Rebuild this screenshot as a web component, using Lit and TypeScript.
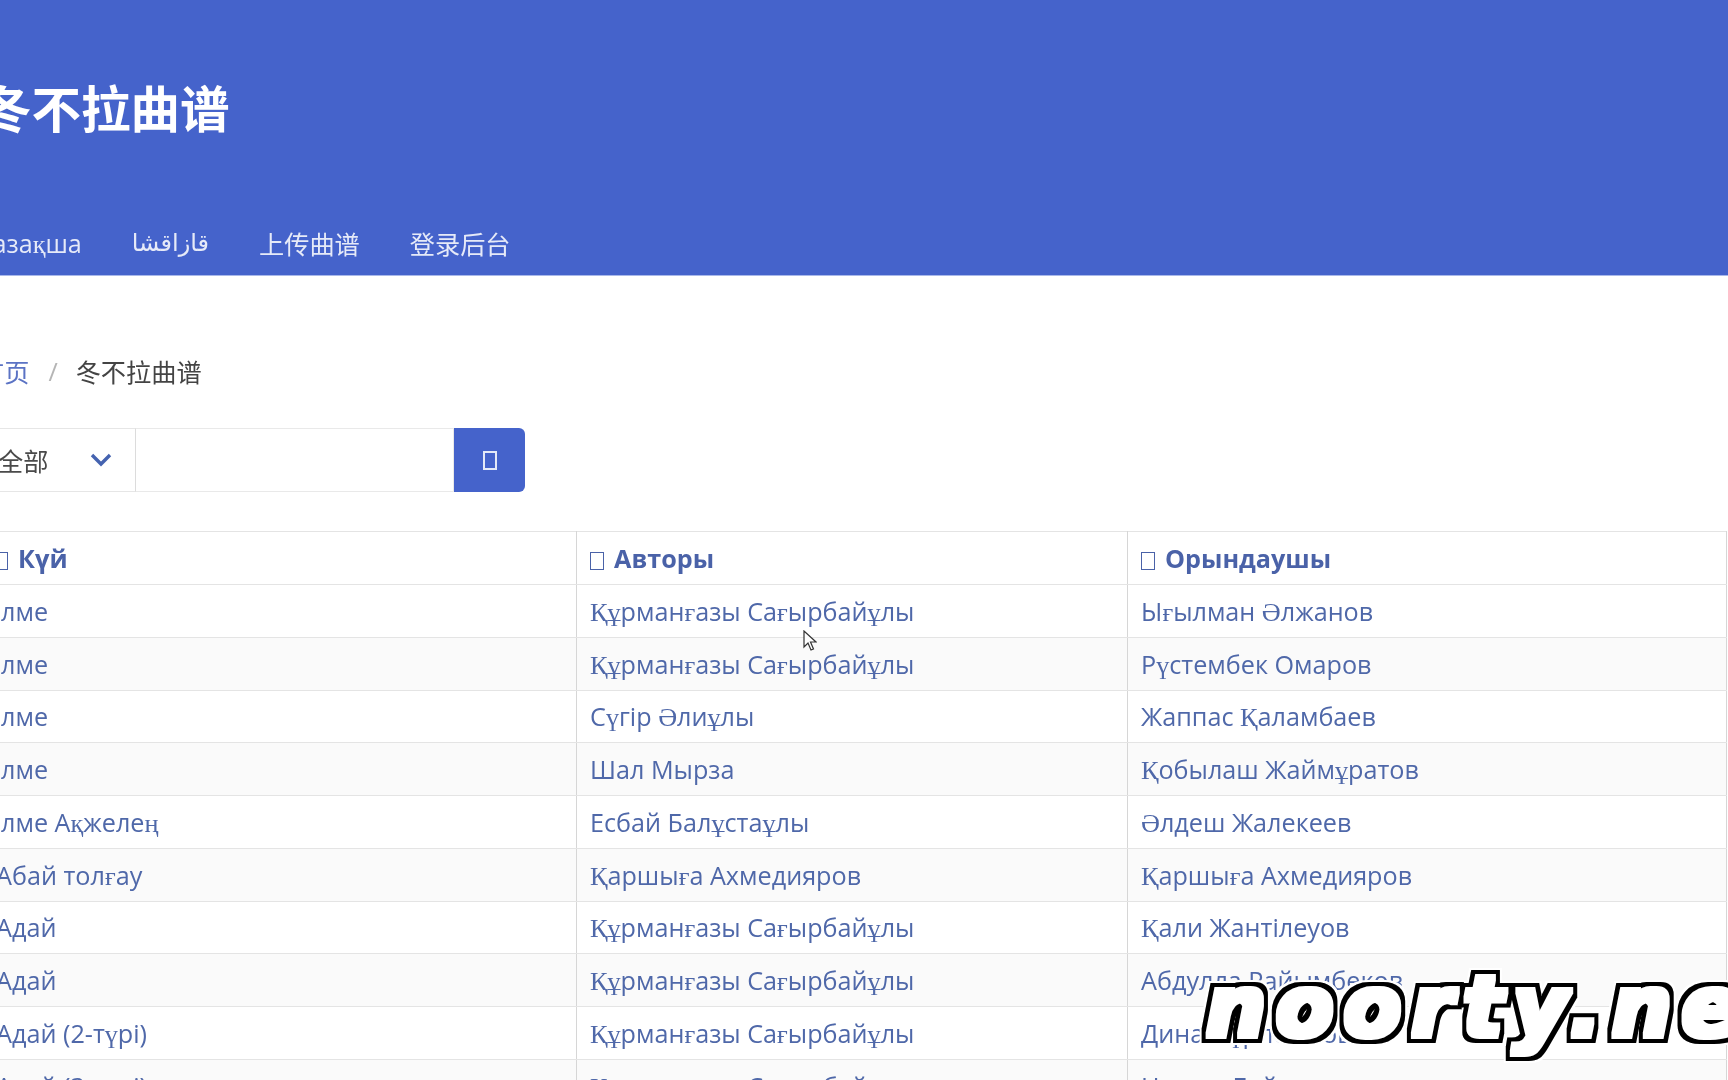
import { LitElement, html, css } from "lit";
import { customElement } from "lit/decorators.js";

const rows: [string, string, string][] = [
  ["лме", "Құрманғазы Сағырбайұлы", "Ығылман Әлжанов"],
  ["лме", "Құрманғазы Сағырбайұлы", "Рүстембек Омаров"],
  ["лме", "Сүгір Әлиұлы", "Жаппас Қаламбаев"],
  ["лме", "Шал Мырза", "Қобылаш Жаймұратов"],
  ["лме Ақжелең", "Есбай Балұстаұлы", "Әлдеш Жалекеев"],
  ["Абай толғау", "Қаршыға Ахмедияров", "Қаршыға Ахмедияров"],
  ["Адай", "Құрманғазы Сағырбайұлы", "Қали Жантілеуов"],
  ["Адай", "Құрманғазы Сағырбайұлы", "Абдулла Райымбеков"],
  ["Адай (2-түрі)", "Құрманғазы Сағырбайұлы", "Дина Нұрпейісова"],
  ["Адай (3-түрі)", "Құрманғазы Сағырбайұлы", "Нұрым Байжанов"],
];

const kaz = (s: string) =>
  s.split(/([ҚқҒғҰұҮүҢңӘә]+)/).map((p, i) => (i % 2 ? html`<span class="kz">${p}</span>` : p));

@customElement("app-root")
export class AppRoot extends LitElement {
  static styles = css`
    :host { display: block; width: 1728px; height: 1080px; overflow: hidden; position: relative; background: #fff;
      font-family: "Open Sans", "Noto Sans CJK SC", sans-serif; font-size: 25.2px; color: #4a4a4a; filter: blur(0.35px); }
    header { height: 276px; background: #4563cb; border-bottom: 1px solid #a9b8ea; box-sizing: border-box;
      display: flex; flex-direction: column; margin-left: -19px; }
    h1 { margin: 80px 0 0 1px; font: 700 49.5px/54px "Noto Sans CJK SC", sans-serif; color: #fff; }
    nav { display: flex; gap: 50px; margin-top: 92px; margin-left: -6px; color: #e6eaf8; line-height: 34px;
      font-family: "Noto Sans CJK SC", sans-serif; }
    nav .cy { font-family: "Open Sans", sans-serif; }
    nav .ar { font-family: "DejaVu Sans", sans-serif; font-size: 24px; }
    .crumb { display: flex; align-items: center; margin: 78px 0 0 -21px; height: 34px;
      font-family: "Noto Sans CJK SC", sans-serif; color: #444; }
    .crumb a { color: #5b73c4; }
    .crumb i { font-style: normal; color: #b5b5b5; margin: 0 18px 0 19px; font-family: "Open Sans", sans-serif; }
    .search { display: flex; height: 64px; margin: 40px 0 0 -42px; width: 567px; }
    .select { width: 178px; box-sizing: border-box; border: 1px solid #e6e6e6; border-right: 1px solid #dcdcdc;
      display: flex; align-items: center; justify-content: space-between; padding: 0 22px 0 39px;
      font-family: "Noto Sans CJK SC", sans-serif; color: #4a4a4a; }
    .input { flex: 1; box-sizing: border-box; border: 1px solid #e9e9e9; border-left: 0; }
    .btn { width: 71px; background: #4563cb; border-radius: 0 6px 6px 0; display: flex; align-items: center; justify-content: center; }
    .btn b { display: block; width: 10px; height: 15px; border: 2px solid #e4e9f8; }
    table { border-collapse: collapse; table-layout: fixed; width: 1741px; margin: 39px 0 0 -15px; color: #4f68a9; }
    col.a { width: 591px; } col.b { width: 551px; } col.c { width: 599px; }
    th, td { border: 1.5px solid #e4e4e4; border-left: 1.5px solid #d6d6d6; border-right: 1.5px solid #d6d6d6;
      text-align: left; padding: 0 13px; white-space: nowrap; overflow: hidden; }
    th { height: 52px; color: #4a62a8; font-weight: 700; }
    td { height: 51.75px; }
    th:first-child { padding-left: 8px; }
    td:first-child { padding-left: 10px; }
    tr.n td:first-child { padding-left: 15px; }
    tr.s td { background: #fafafa; }
    th em { display: inline-block; box-sizing: border-box; width: 14px; height: 18px; border: 1.5px solid #4a62a8;
      margin-right: 10px; vertical-align: -2px; }
    .kz { font-family: "Liberation Serif", serif; font-size: 26.2px; }
    .cursor { position: absolute; left: 803px; top: 630px; }
    .defs { position: absolute; width: 0; height: 0; }
    .mark { position: absolute; left: 1206px; top: 952px; white-space: nowrap; font: italic 700 84px/110px "DejaVu Sans", sans-serif;
      color: #fff; letter-spacing: 10px; filter: url(#wm); }
  `;

  render() {
    return html`
      <svg class="defs" aria-hidden="true">
        <filter id="wm" x="-5%" y="-10%" width="110%" height="120%" color-interpolation-filters="sRGB">
          <feMorphology in="SourceAlpha" operator="dilate" radius="3" result="body" />
          <feMorphology in="SourceAlpha" operator="dilate" radius="7" result="edge" />
          <feMorphology in="SourceAlpha" operator="dilate" radius="9" result="halo" />
          <feFlood flood-color="#fff" result="w" />
          <feFlood flood-color="#000" result="k" />
          <feComposite in="w" in2="halo" operator="in" result="haloW" />
          <feComposite in="k" in2="edge" operator="in" result="edgeK" />
          <feComposite in="w" in2="body" operator="in" result="bodyW" />
          <feMerge><feMergeNode in="haloW" /><feMergeNode in="edgeK" /><feMergeNode in="bodyW" /></feMerge>
        </filter>
      </svg>
      <header>
        <h1>冬不拉曲谱</h1>
        <nav>
          <span class="cy">${kaz("Қазақша")}</span>
          <span class="ar">قازاقشا</span>
          <span>上传曲谱</span>
          <span>登录后台</span>
        </nav>
      </header>
      <div class="crumb"><a>首页</a><i>/</i><span>冬不拉曲谱</span></div>
      <div class="search">
        <div class="select"><span>全部</span>
          <svg width="24" height="16" viewBox="0 0 24 16"><path d="M3 3l9 9 9-9" fill="none" stroke="#4563b0" stroke-width="3.4"/></svg>
        </div>
        <div class="input"></div>
        <div class="btn"><b></b></div>
      </div>
      <table>
        <colgroup><col class="a" /><col class="b" /><col class="c" /></colgroup>
        <thead>
          <tr><th><em></em>Күй</th><th><em></em>Авторы</th><th><em></em>Орындаушы</th></tr>
        </thead>
        <tbody>
          ${rows.map((r, i) => html`<tr class="${i % 2 ? "s" : ""} ${i < 5 ? "n" : ""}">${r.map((c) => html`<td>${kaz(c)}</td>`)}</tr>`)}
        </tbody>
      </table>
      <svg class="cursor" width="14" height="22" viewBox="0 0 14 22"><path d="M1 1v16l4-4 3 7 2.500-1-3-7h5.500z" fill="#fff" stroke="#333" stroke-width="1.200"/></svg>
      <div class="mark">noorty.net</div>
    `;
  }
}
